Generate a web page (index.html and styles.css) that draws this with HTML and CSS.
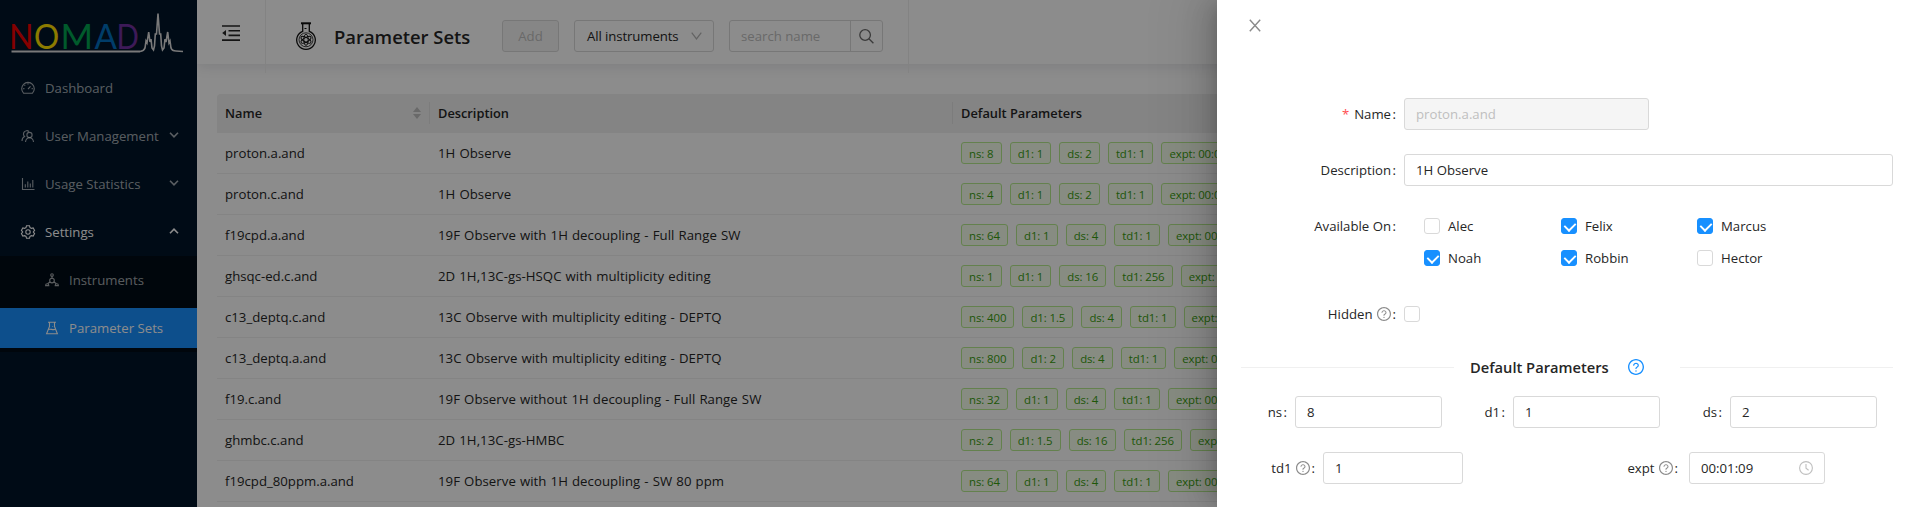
FILE: index.html
```
<!DOCTYPE html>
<html lang="en">
<head>
<meta charset="utf-8">
<title>Parameter Sets</title>
<link rel="stylesheet" href="styles.css">
</head>
<body>
<svg class="defs" aria-hidden="true">
  <symbol id="help" viewBox="64 64 896 896"><path d="M512 64C264.600 64 64 264.600 64 512s200.600 448 448 448 448-200.600 448-448S759.400 64 512 64zm0 820c-205.400 0-372-166.600-372-372s166.600-372 372-372 372 166.600 372 372-166.600 372-372 372z"/><path d="M623.600 316.700C593.600 290.400 554 276 512 276s-81.600 14.500-111.600 40.700C369.200 344 352 380.700 352 420v7.600c0 4.400 3.600 8 8 8h48c4.400 0 8-3.600 8-8V420c0-44.100 43.100-80 96-80s96 35.900 96 80c0 31.100-22 59.600-56.100 72.700-21.200 8.100-39.200 22.300-52.100 40.900-13.100 19-19.900 41.800-19.900 64.900V620c0 4.400 3.600 8 8 8h48c4.400 0 8-3.600 8-8v-22.700a48.300 48.300 0 0 1 30.900-44.800c59-22.700 97.100-74.700 97.100-132.500.1-39.300-17.100-76-48.300-103.300zM472 732a40 40 0 1 0 80 0 40 40 0 1 0-80 0z"/></symbol>
  <symbol id="chev" viewBox="0 0 10 6"><path d="M1 .8l4 4 4-4" fill="none" stroke="currentColor" stroke-width="1.600"/></symbol>
</svg>
<div class="app">
  <aside class="sider">
    <svg class="logo" viewBox="0 0 174 42">
      <g class="logo-text">
        <text transform="translate(-2 37) scale(.92 1)" fill="#f00000">N</text>
        <text transform="translate(23 37) scale(.9 1)" fill="#ffe100">O</text>
        <text transform="translate(49.500 37) scale(1 1)" fill="#00a550">M</text>
        <text transform="translate(83.500 37) scale(.95 1)" fill="#0070c0">A</text>
        <text transform="translate(105.500 37) scale(.84 1)" fill="#7030a0">D</text>
      </g>
      <path d="M.5 39.500H129" fill="none" stroke="#ddd" stroke-width="1.800"/>
      <path d="M129 39.500Q133 39 134 36L135 29 136 31 137.700 20 139 30 140 27 141 36 142.500 38 143.500 34 144.300 22 145.500 22 147 1.500 148.500 22 149.700 22 150.500 34 151.500 38 153 36 154 27 155 30 156.700 20 158 31 159 29 160 36Q161 39 165 39L172 39.500" fill="none" stroke="#ddd" stroke-width="1.600"/>
    </svg>
    <nav class="menu">
      <div class="item"><svg class="ic" viewBox="0 0 14 14"><path d="M2.700 12.300A6.300 6.300 0 1 1 11.300 12.300z"/><path d="M7 8l2.500-2.600M7 2.300v1.200M3.500 4l.7.700M2.200 7.600h1.200M10.600 7.600h1.200"/></svg><span>Dashboard</span></div>
      <div class="item"><svg class="ic" viewBox="0 0 14 14"><path d="M1 12c0-2.600 1.200-3.800 2.600-4.500A3.200 3.200 0 1 1 8 2.500"/><circle cx="8.500" cy="6" r="2.600"/><path d="M4.500 13c.3-2.700 1.800-4.200 4-4.200s3.700 1.500 4 4.200"/></svg><span>User Management</span><svg class="arrow" viewBox="0 0 10 6"><use href="#chev"/></svg></div>
      <div class="item"><svg class="ic" viewBox="0 0 14 14"><path d="M1.500 1v11.500h12M4.300 10.500V7.300M6.800 10.500V4.500M9.300 10.500V6.500M11.800 10.500V3"/></svg><span>Usage Statistics</span><svg class="arrow" viewBox="0 0 10 6"><use href="#chev"/></svg></div>
      <div class="item open"><svg class="ic" viewBox="0 0 14 14"><path d="M5.500.8h3l.5 1.800 1.400.8 1.800-.5 1.400 2.500L12.300 7l1.300 1.600-1.400 2.500-1.800-.5-1.400.8-.5 1.800h-3L5 11.400l-1.400-.8-1.800.5L.4 8.600 1.700 7 .4 5.400l1.400-2.500 1.800.5L5 2.600z"/><circle cx="7" cy="7" r="2.200"/></svg><span>Settings</span><svg class="arrow up" viewBox="0 0 10 6"><use href="#chev"/></svg></div>
      <div class="submenu">
        <div class="item sub"><svg class="ic" viewBox="0 0 14 14"><circle cx="7" cy="2" r="1.300"/><circle cx="7" cy="7.600" r="2.300"/><path d="M7 3.300v2M5 9l-2.200 1.500M9 9l2.200 1.500M.6 12.600c0-2.500 3.200-2.500 3.200 0zM10.200 12.600c0-2.500 3.200-2.500 3.200 0z"/></svg><span>Instruments</span></div>
        <div class="item sub selected"><svg class="ic" viewBox="0 0 14 14"><path d="M3 1.200h8M4.500 1.500v4L1.600 12.800h10.800L9.500 5.500v-4M3.500 8.500c2-1.200 4 1 7-.2"/><path d="M7.500 5.500h.6"/></svg><span>Parameter Sets</span></div>
      </div>
    </nav>
  </aside>
  <main class="main">
    <header class="header">
      <div class="fold"><svg viewBox="0 0 18 16" width="18" height="16"><path d="M0 1h18M6.500 5.700H18M6.500 10.400H18M0 15.100h18" fill="none" stroke="#262626" stroke-width="1.600"/><path d="M4 5v6L.2 8z" fill="#262626"/></svg></div>
      <div class="toolbar">
        <svg class="flask" viewBox="0 0 20 28" fill="none" stroke="#111"><path d="M5 1.300h10" stroke-width="2"/><path d="M6.700 2v7.300a9.300 9.300 0 1 0 6.600 0V2" stroke-width="1.300"/><circle cx="10" cy="17.800" r="7" stroke-width=".8"/><g stroke-width="1"><ellipse cx="10" cy="17.800" rx="2.200" ry="5.600"/><ellipse cx="10" cy="17.800" rx="2.200" ry="5.600" transform="rotate(60 10 17.800)"/><ellipse cx="10" cy="17.800" rx="2.200" ry="5.600" transform="rotate(120 10 17.800)"/></g><path d="M8.500 6.500h2" /></svg>
        <h1 class="title">Parameter Sets</h1>
        <button class="add" disabled>Add</button>
        <div class="select"><span>All instruments</span><svg width="11" height="8" viewBox="0 0 11 8"><path d="M.7.700l4.800 6.200L10.300.7" fill="none" stroke="#b5b5b5" stroke-width="1.200"/></svg></div>
        <div class="search"><span class="search-in">search name</span><span class="search-btn"><svg width="15" height="15" viewBox="0 0 15 15" fill="none" stroke="#6b6b6b" stroke-width="1.300"><circle cx="6.100" cy="6" r="5.300"/><path d="M9.900 9.800l4.500 4.500"/></svg></span></div>
      </div>
    </header>
    <section class="content">
      <div class="row head"><div class="cell sep">Name<svg class="sorter" width="8" height="12" viewBox="0 0 8 12"><path d="M4 0l4 5H0zM4 12l4-5H0z" fill="#bfbfbf"/></svg></div><div class="cell sep">Description</div><div class="cell">Default Parameters</div></div>
      <div class="row"><div class="cell name">proton.a.and</div><div class="cell desc">1H Observe</div><div class="cell tags"><i>ns: 8</i><i>d1: 1</i><i>ds: 2</i><i>td1: 1</i><i>expt: 00:01:09</i></div></div>
      <div class="row"><div class="cell name">proton.c.and</div><div class="cell desc">1H Observe</div><div class="cell tags"><i>ns: 4</i><i>d1: 1</i><i>ds: 2</i><i>td1: 1</i><i>expt: 00:00:49</i></div></div>
      <div class="row"><div class="cell name">f19cpd.a.and</div><div class="cell desc">19F Observe with 1H decoupling - Full Range SW</div><div class="cell tags"><i>ns: 64</i><i>d1: 1</i><i>ds: 4</i><i>td1: 1</i><i>expt: 00:02:09</i></div></div>
      <div class="row"><div class="cell name">ghsqc-ed.c.and</div><div class="cell desc">2D 1H,13C-gs-HSQC with multiplicity editing</div><div class="cell tags"><i>ns: 1</i><i>d1: 1</i><i>ds: 16</i><i>td1: 256</i><i>expt: 00:05:09</i></div></div>
      <div class="row"><div class="cell name">c13_deptq.c.and</div><div class="cell desc">13C Observe with multiplicity editing - DEPTQ</div><div class="cell tags"><i>ns: 400</i><i>d1: 1.5</i><i>ds: 4</i><i>td1: 1</i><i>expt: 00:20:09</i></div></div>
      <div class="row"><div class="cell name">c13_deptq.a.and</div><div class="cell desc">13C Observe with multiplicity editing - DEPTQ</div><div class="cell tags"><i>ns: 800</i><i>d1: 2</i><i>ds: 4</i><i>td1: 1</i><i>expt: 00:45:09</i></div></div>
      <div class="row"><div class="cell name">f19.c.and</div><div class="cell desc">19F Observe without 1H decoupling - Full Range SW</div><div class="cell tags"><i>ns: 32</i><i>d1: 1</i><i>ds: 4</i><i>td1: 1</i><i>expt: 00:01:09</i></div></div>
      <div class="row"><div class="cell name">ghmbc.c.and</div><div class="cell desc">2D 1H,13C-gs-HMBC</div><div class="cell tags"><i>ns: 2</i><i>d1: 1.5</i><i>ds: 16</i><i>td1: 256</i><i>expt: 00:15:09</i></div></div>
      <div class="row"><div class="cell name">f19cpd_80ppm.a.and</div><div class="cell desc">19F Observe with 1H decoupling - SW 80 ppm</div><div class="cell tags"><i>ns: 64</i><i>d1: 1</i><i>ds: 4</i><i>td1: 1</i><i>expt: 00:02:09</i></div></div>
    </section>
  </main>
</div>
<div class="mask"></div>
<div class="drawer">
  <svg class="close" width="12" height="13" viewBox="0 0 12 13"><path d="M.8.700l10.400 11.600M11.200.7L.8 12.300" fill="none" stroke="#8a8a8a" stroke-width="1.400"/></svg>
  <div class="field"><label><b>*</b>Name<s>:</s></label><div class="input disabled short">proton.a.and</div></div>
  <div class="field"><label>Description<s>:</s></label><div class="input wide">1H Observe</div></div>
  <div class="field avail"><label>Available On<s>:</s></label>
    <div class="checks">
      <span class="check"><em></em>Alec</span><span class="check on"><em></em>Felix</span><span class="check on"><em></em>Marcus</span>
      <span class="check on"><em></em>Noah</span><span class="check on"><em></em>Robbin</span><span class="check"><em></em>Hector</span>
    </div></div>
  <div class="field hidden-field"><label>Hidden<svg class="q"><use href="#help"/></svg><s>:</s></label><span class="check"><em></em></span></div>
  <div class="divider"><span>Default Parameters</span><svg class="qb"><use href="#help"/></svg></div>
  <div class="params">
    <div class="p p1"><label>ns<s>:</s></label><div class="input num">8</div></div>
    <div class="p p2"><label>d1<s>:</s></label><div class="input num">1</div></div>
    <div class="p p3"><label>ds<s>:</s></label><div class="input num">2</div></div>
  </div>
  <div class="params second">
    <div class="p p4"><label>td1<svg class="q"><use href="#help"/></svg><s>:</s></label><div class="input num">1</div></div>
    <div class="p p5"><label>expt<svg class="q"><use href="#help"/></svg><s>:</s></label><div class="input time"><span>00:01:09</span><svg width="14" height="14" viewBox="0 0 14 14" fill="none" stroke="#bfbfbf" stroke-width="1.100"><circle cx="7" cy="7" r="6.400"/><path d="M7 3v4.300l2.600 2"/></svg></div></div>
  </div>
</div>
</body>
</html>
```
FILE: styles.css
```
* { box-sizing: border-box; }
body { margin: 0; width: 1917px; height: 507px; overflow: hidden; position: relative; background: #fff; color: #262626; font: 13.2px/22px "Open Sans", "Noto Sans", sans-serif; }
.defs { position: absolute; width: 0; height: 0; }
s { text-decoration: none; }
.app { display: flex; height: 507px; overflow: hidden; }
.sider { width: 197px; flex: none; background: #001529; color: rgba(255,255,255,.65); }
.logo { display: block; width: 174px; height: 42px; margin: 12px 0 14px 11px; overflow: visible; }
.logo-text { font: 35px Lato, sans-serif; }
.item { display: flex; align-items: center; height: 40px; margin: 4px 0 8px; padding: 0 18px 0 21px; }
.item span { flex: 1; margin-left: 10px; white-space: nowrap; }
.ic { width: 14px; height: 14px; fill: none; stroke: currentColor; stroke-width: 1.1; overflow: visible; }
.arrow { width: 10px; height: 6px; margin-top: -2px; }
.arrow.up { transform: rotate(180deg); }
.open { color: #fff; margin-bottom: 4px; }
.submenu { background: #000c17; height: 96px; padding-top: 4px; }
.item.sub { padding-left: 45px; margin: 0 0 8px; }
.item.sub.selected { background: #1890ff; color: #fff; }
.main { flex: 1; min-width: 0; background: #fff; }
.header { display: flex; height: 64px; box-shadow: 0 3px 12px rgba(0,21,41,.1); }
.fold { width: 69px; height: 73px; flex: none; border-right: 1px solid #eee; padding: 25px 0 0 25px; line-height: 0; }
.toolbar { display: flex; width: 643px; height: 73px; flex: none; padding: 20px 0 0 30px; border-right: 1px solid #eee; }
.flask { width: 20px; height: 28px; margin: 2px 18px 0 0; }
.title { font-size: 18.4px; line-height: 34px; font-weight: 600; margin: 0; width: 168px; white-space: nowrap; }
.add, .select, .search { height: 32px; border: 1px solid #d9d9d9; border-radius: 3px; line-height: 30px; }
.add { width: 57px; padding: 0; background: #f5f5f5; color: #bfbfbf; font: inherit; line-height: 30px; margin-right: 15px; }
.select { width: 140px; display: flex; align-items: center; justify-content: space-between; padding: 0 11px 0 12px; margin-right: 15px; letter-spacing: -.1px; }
.search { width: 154px; display: flex; color: #bfbfbf; }
.search-in { flex: 1; padding-left: 11px; }
.search-btn { width: 32px; border-left: 1px solid #d9d9d9; display: flex; align-items: center; justify-content: center; }
.content { padding: 30px 0 0 20px; }
.row { display: grid; grid-template-columns: 213px 523px 900px; height: 41px; border-bottom: 1px solid #f0f0f0; }
.cell { padding: 8.5px 8px; white-space: nowrap; position: relative; }
.desc { letter-spacing: .05px; word-spacing: .6px; }
.head { height: 39px; background: #f0f0f0; border: 0; border-radius: 4px 0 0 0; font-weight: 600; font-size: 12.8px; }
.head .cell { padding-top: 7.5px; }
.sep::after { content: ""; position: absolute; right: 0; top: 8px; bottom: 9px; width: 1px; background: #e2e2e2; }
.sorter { position: absolute; right: 9px; top: 13px; }
.tags { display: flex; gap: 8px; padding-top: 9px; }
.tags i { font-style: normal; font-size: 11.4px; letter-spacing: -.1px; line-height: 21px; height: 22px; padding: 0 7.1px; border: 1px solid #b7eb8f; border-radius: 3px; background: #f6ffed; color: #389e0d; }
.mask { position: absolute; inset: 0; background: rgba(0,0,0,.45); }
.drawer { position: absolute; right: 0; top: 0; width: 700px; height: 507px; background: #fff; padding: 19px 24px 0; box-shadow: -6px 0 16px -8px rgba(0,0,0,.2), -9px 0 28px rgba(0,0,0,.12), -12px 0 48px 16px rgba(0,0,0,.08); }
.close { display: block; margin: 0 0 66px 8px; }
.field { display: flex; margin-bottom: 24px; }
.field > label { width: 163px; height: 32px; line-height: 32px; padding-right: 8px; display: flex; justify-content: flex-end; align-items: center; }
label s { margin-left: 1.5px; }
label b { color: #ff4d4f; font-weight: 400; margin-right: 5px; }
.input { height: 32px; border: 1px solid #d9d9d9; border-radius: 3px; line-height: 30px; padding: 0 11px; }
.num { line-height: 31px; }
.short { width: 245px; }
.wide { width: 489px; }
.disabled { background: #f5f5f5; color: #bfbfbf; }
.checks { display: grid; grid-template-columns: 137px 136px 140px; grid-auto-rows: 32px; margin-left: 20px; }
.check { display: flex; align-items: center; gap: 8px; }
.check em { width: 16px; height: 16px; border: 1px solid #d9d9d9; border-radius: 3px; position: relative; }
.check.on em { background: #1890ff; border-color: #1890ff; }
.check.on em::after { content: ""; position: absolute; left: 4px; top: 1px; width: 6px; height: 9px; border: solid #fff; border-width: 0 2px 2px 0; transform: rotate(45deg) scale(.95); }
.q { width: 14px; height: 14px; margin-left: 4px; fill: #8c8c8c; }
.q + s { margin-left: 2px; }
.divider { display: flex; align-items: center; height: 26px; margin: 16px 0; font-size: 14.7px; font-weight: 600; white-space: nowrap; }
.divider::before, .divider::after { content: ""; flex: none; width: 213px; height: 1px; background: #f0f0f0; }
.divider span { margin-left: 16px; width: 158px; }
.qb { width: 16px; height: 16px; fill: #1890ff; margin-right: 36px; }
.params { display: flex; height: 32px; margin-bottom: 24px; }
.p { display: flex; }
.p label { display: flex; align-items: center; justify-content: flex-end; padding-right: 8px; }
.p .input { width: 147px; }
.p1 label { width: 54px; }
.p2 label { width: 71px; }
.p3 label { width: 70px; }
.p4 label { width: 82px; }
.p4 .input { width: 140px; }
.p5 label { width: 226px; padding-right: 11px; }
.p5 .input { width: 136px; }
.time { display: flex; align-items: center; justify-content: space-between; }
```
